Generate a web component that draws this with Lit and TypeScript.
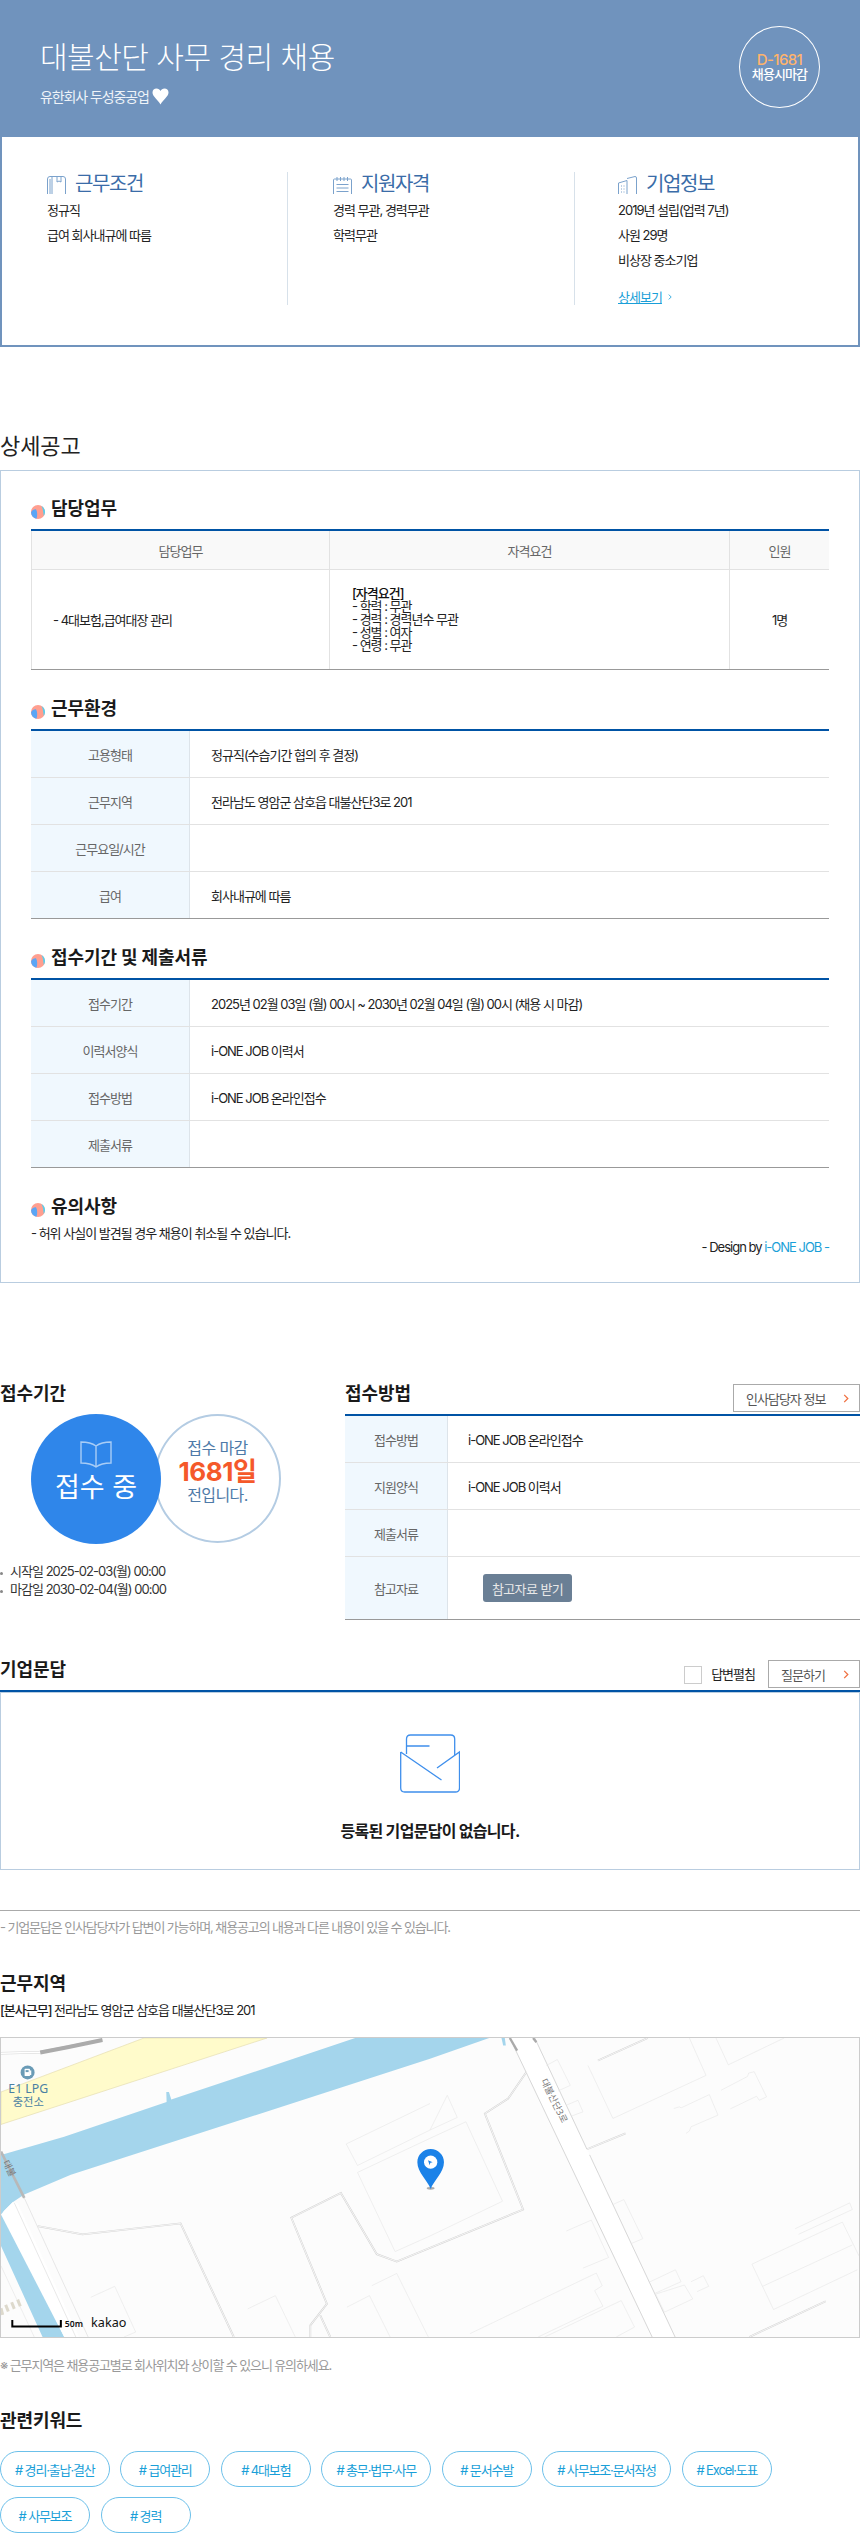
import { LitElement, html, css, svg } from "lit";
import { customElement } from "lit/decorators.js";

const bldg: string[] = [
  "270,805 342,772 405,910 370,925", "742,840 825,800 885,925", "1040,835 1108,800 1170,925",
  "1115,770 1190,733 1285,925", "1290,220 1038,342 1072,407 1290,300", "1290,325 1072,428 1185,667 1290,620",
  "1290,300 1342,195 1372,262 1290,300", "1290,325 1398,275 1508,515 1290,620",
  "1640,105 1673,87 1712,165 1675,182", "1700,225 1735,210 1750,245 1715,258",
  "1765,105 1840,265 2120,135 2070,22", "2150,22 2187,103 2355,22",
  "2023,235 2040,230 2045,233 2130,193 2156,255 2075,290 2070,303 2060,310",
  "2165,180 2245,138 2248,128 2265,124 2302,200 2280,210 2272,198 2193,236",
  "1840,525 1873,510 1930,628 1897,642", "1700,605 1775,572 1827,685 1750,717",
  "1410,915 1790,732 1808,770 1785,785 1810,832 1615,925", "1635,925 1865,815 1905,895 1850,925",
  "1948,760 2028,722 2045,758 1967,793 1995,850 2080,810 2055,768 1970,795",
  "2075,758 2112,740 2128,772 2093,788", "2388,598 2552,520 2560,540 2398,615",
  "2258,705 2530,578 2580,680", "2290,772 2560,647", "2258,705 2323,842 2575,722",
];

const dbl: string[] = [
  "110,590 245,615 540,582 700,925",
  "930,925 930,890 980,825 873,565 1022,490 1130,675 1190,697 1570,540 1455,250 1525,205 1580,125",
  "960,860 990,925", "1795,90 1945,22", "2250,925 2480,817", "1762,358 1878,310",
];

const mapArt = svg`
  <rect x="0" y="22" width="2580" height="903" fill="#fcfcfc"></rect>
  <polygon points="0,185 430,22 800,22 0,283" fill="#fffbcb" stroke="#e4dcae" stroke-width="2"></polygon>
  <polygon points="0,375 190,320 498,215 497,185 505,185 512,208 1065,22 1468,22 1290,85 210,435 70,495 35,518 8,545 190,925 125,925 0,650" fill="#a4d5ec"></polygon>
  <polygon points="1505,22 1515,22 1518,45 1510,45" fill="#a4d5ec"></polygon>
  <polygon points="0,555 8,545 35,518 50,520 235,925 190,925" fill="#ffffff"></polygon>
  <polyline points="0,68 115,65 305,28" fill="none" stroke="#d5d5d5" stroke-width="7"></polyline>
  <polyline points="0,68 115,65 305,28" fill="none" stroke="#fff" stroke-width="4"></polyline>
  <polyline points="118,66 200,50 305,28" fill="none" stroke="#ababab" stroke-width="12"></polyline>
  <polyline points="0,365 70,505" fill="none" stroke="#b8b8b8" stroke-width="8"></polyline>
  <polyline points="40,520 225,925" fill="none" stroke="#d8d8d8" stroke-width="1.8"></polyline>
  <polyline points="70,505 262,925" fill="none" stroke="#d8d8d8" stroke-width="1.8"></polyline>
  <polyline points="0,710 100,925" fill="none" stroke="#e4e4e4" stroke-width="1.8"></polyline>
  <g stroke="#ddd9cc" stroke-width="9">
    <line x1="50" y1="812" x2="58" y2="832"></line><line x1="32" y1="820" x2="40" y2="840"></line>
    <line x1="14" y1="828" x2="22" y2="848"></line><line x1="0" y1="838" x2="5" y2="858"></line>
  </g>
  <polygon points="1530,22 1605,22 2027,925 1958,925" fill="#ffffff"></polygon>
  <polyline points="1530,22 1958,925" fill="none" stroke="#cfcfcf" stroke-width="2.5"></polyline>
  <polyline points="1605,22 1762,358" fill="none" stroke="#cfcfcf" stroke-width="2.5"></polyline>
  <polyline points="1770,375 2027,925" fill="none" stroke="#cfcfcf" stroke-width="2.5"></polyline>
  <polyline points="1530,22 1552,60" fill="none" stroke="#aaa" stroke-width="7"></polyline>
  <polyline points="1600,22 1610,35" fill="none" stroke="#aaa" stroke-width="7"></polyline>
  ${bldg.map((p) => svg`<polyline points=${p} fill="none" stroke="#e6e6e6" stroke-width="1.8"></polyline>`)}
  ${dbl.map((p) => svg`<polyline points=${p} fill="none" stroke="#d2d2d2" stroke-width="5.5"></polyline><polyline points=${p} fill="none" stroke="#fbfbfb" stroke-width="2.5"></polyline>`)}
  <circle cx="80" cy="126" r="21" fill="#6a9bb6"></circle>
  <rect x="71" y="115" width="16" height="22" rx="2" fill="#fff"></rect>
  <rect x="74" y="119" width="9" height="6" fill="#6a9bb6"></rect>
  <rect x="87" y="120" width="4" height="14" fill="#fff"></rect>
  <text class="mt lpg" x="82" y="189" text-anchor="middle">E1 LPG</text>
  <text class="mt lpg2" x="82" y="226" text-anchor="middle">충전소</text>
  <text class="mt road" transform="translate(1655,216) rotate(64)" text-anchor="middle">대불산단3로</text>
  <text class="mt road" transform="translate(16,420) rotate(64)" text-anchor="middle">대불</text>
  <path d="M34 874 V893 H180 V874" fill="none" stroke="#000" stroke-width="6"></path>
  <text class="mt sc" x="192" y="895">50m</text>
  <text class="mt kk" x="271" y="896">kakao</text>
  <ellipse cx="1292" cy="476" rx="12" ry="4" fill="#aaa"></ellipse>
  <path d="M1292 478 C1283 452 1252 428 1252 397 C1252 375 1270 357 1292 357 C1314 357 1332 375 1332 397 C1332 428 1301 452 1292 478 Z" fill="#1b82e8"></path>
  <circle cx="1292" cy="397" r="20" fill="#fff"></circle>
  <path d="M1284 391 L1298 397 L1291 399 L1289 406 Z" fill="#1b82e8"></path>
`;

const bullet = html`<svg class="bullet" viewBox="0 0 14 14">
  <circle cx="7" cy="7" r="7" fill="#ff9f90"></circle>
  <path d="M0 7.5 C1 5 3 4 5 4.2 C6.5 7 6.5 10.5 5.5 13.8 C2.5 13.2 0.2 10.8 0 7.5 Z" fill="#5aa6f6"></path>
  <path d="M10.5 1 C13 2.5 14 5 14 7 C14 8.5 13.5 9.8 12.6 11 C12.6 7.5 12 4 10.5 1 Z" fill="#4fd2f2"></path>
</svg>`;

const chev = (cls = "chev") => html`<svg class=${cls} viewBox="0 0 6 10"><polyline points="1,1 5,5 1,9" fill="none" stroke="currentColor" stroke-width="1.4"></polyline></svg>`;

@customElement("app-root")
export class AppRoot extends LitElement {
  static styles = css`
    :host { display: block; width: 860px; font-family: Inter, "Noto Sans CJK KR", sans-serif; color: #222; font-size: 13px; letter-spacing: -1px; padding-bottom: 1px; }
    * { box-sizing: border-box; }
    .hero { height: 137px; background: #7093bd; display: flex; justify-content: space-between; padding: 26px 40px 0 40px; color: #fff; }
    .title { font-size: 30px; line-height: 40px; font-weight: 300; letter-spacing: -0.5px; margin-top: 11px; }
    .sub { display: flex; align-items: center; gap: 3px; height: 20px; margin-top: 9px; font-size: 14px; font-weight: 400; color: #eef3f9; letter-spacing: -1.1px; }
    .heart { width: 17px; height: 17px; }
    .dday { width: 81px; height: 82px; border: 1px solid #fff; border-radius: 50%; display: flex; flex-direction: column; align-items: center; justify-content: center; font-size: 13px; line-height: 15px; font-weight: 500; letter-spacing: -0.9px; }
    .dday b { color: #ffb36b; font-size: 15px; font-weight: 500; letter-spacing: -0.6px; }
    .summary { height: 210px; border: 2px solid #7093bd; border-top: 0; display: grid; grid-template-columns: 285px 287px 284px; padding-top: 35px; }
    .col { height: 133px; padding-left: 45px; }
    .col + .col { border-left: 1px solid #d7e1ea; }
    .col:last-child { padding-left: 43px; }
    .col h4 { margin: 0; height: 26px; display: flex; align-items: center; gap: 9px; font-size: 20px; font-weight: 400; color: #3a6ca8; letter-spacing: -1.4px; padding-bottom: 6px; }
    .col .ic { width: 19px; height: 18px; flex: none; margin-top: 6px; }
    .col p { margin: 0; line-height: 25px; }
    .more { display: flex; align-items: center; gap: 6px; margin-top: 16px; font-size: 13px; line-height: 16px; color: #1a9fd8; }
    .more span { text-decoration: underline; }
    .more .chev { width: 4px; height: 6px; color: #1a9fd8; }
    h2 { margin: 84px 0 9px; font-size: 22px; line-height: 30px; font-weight: 400; letter-spacing: -0.1px; }
    .detail { border: 1px solid #b9cde0; padding: 21px 30px 28px; }
    .sec-h { height: 30px; margin: 0 0 7px; display: flex; align-items: center; gap: 6px; font-size: 18px; font-weight: 700; letter-spacing: -0.1px; color: #1a1a1a; }
    .bullet { width: 14px; height: 14px; flex: none; margin-top: 10px; }
    .sec-h.plain { margin: 0; }
    .tb { border-top: 2px solid #0053a5; margin-bottom: 22px; }
    .tb.end { border-bottom: 1px solid #999; }
    .r { display: flex; height: 47px; border-bottom: 1px solid #e2e2e2; align-items: stretch; }
    .r:last-child { border-bottom: 0; height: 46px; }
    .k { flex: none; width: 159px; background: #f0f8fe; border-right: 1px solid #dde4ea; color: #666; display: flex; align-items: center; justify-content: center; }
    .v { flex: 1; padding-left: 21px; display: flex; align-items: center; color: #222; }
    .h3c { display: grid; grid-template-columns: 298px 400px 1fr; border-left: 1px solid #e2e2e2; }
    .h3c > div { border-right: 1px solid #e2e2e2; display: flex; align-items: center; }
    .h3c > div:last-child { border-right: 0; justify-content: center; }
    .hd > div { height: 39px; background: #f9f9f9; justify-content: center; color: #666; border-bottom: 1px solid #e2e2e2; }
    .bd > div { height: 99px; }
    .bd .a { padding-left: 21px; }
    .bd .b { padding-left: 22px; display: block; padding-top: 17px; line-height: 13px; color: #222; }
    .bd .b b { font-weight: 500; color: #111; }
    .note { line-height: 14px; height: 14px; margin-top: 6px; }
    .design { line-height: 14px; height: 14px; text-align: right; }
    .design span { color: #1a9fd8; }
    .two { display: flex; margin-top: 96px; }
    .left { width: 345px; flex: none; }
    .right { flex: 1; }
    .plainh { font-size: 18px; line-height: 30px; height: 30px; font-weight: 700; letter-spacing: -0.1px; margin: 0; color: #1a1a1a; }
    .circles { display: flex; margin: 5px 0 0 31px; }
    .c1 { position: relative; z-index: 1; width: 130px; height: 130px; border-radius: 50%; background: #2f86ea; color: #fff; display: flex; flex-direction: column; align-items: center; padding-top: 27px; font-size: 27px; line-height: 34px; letter-spacing: 0; }
    .c1 svg { width: 32px; height: 27px; margin-bottom: 3px; }
    .c2 { width: 127px; height: 129px; margin-left: -7px; border: 2px solid #b4cce3; border-radius: 50%; display: flex; flex-direction: column; align-items: center; justify-content: center; font-size: 16px; line-height: 20px; color: #4e7aa8; letter-spacing: -0.6px; padding-bottom: 15px; }
    .c2 b { color: #f5592a; font-size: 26px; line-height: 28px; font-weight: 700; letter-spacing: -0.4px; margin-bottom: -1px; }
    .dates { list-style: none; margin: 18px 0 0; padding: 0; }
    .dates li { line-height: 18px; padding-left: 10px; position: relative; color: #333; letter-spacing: -0.97px; }
    .dates li::before { content: ""; position: absolute; left: 0; top: 10px; width: 3px; height: 3px; border-radius: 50%; background: #888; }
    .rhead { display: flex; justify-content: space-between; align-items: flex-end; height: 33px; margin-bottom: 2px; }
    .rhead .plainh { align-self: flex-start; }
    .btn { height: 28px; border: 1px solid #aaa; display: flex; align-items: center; justify-content: space-between; padding: 0 10px 0 12px; color: #555; background: #fff; }
    .btn.w1 { width: 127px; }
    .btn.w2 { width: 92px; }
    .chev { width: 6px; height: 9px; color: #f07040; flex: none; }
    .t2 .k { width: 103px; }
    .t2 .v { padding-left: 20px; }
    .t2 { margin-bottom: 0; }
    .t2 .r:last-child { height: 62px; }
    .dl { background: #6a7f95; color: #e8e8e8; height: 28px; width: 89px; border-radius: 3px; display: flex; align-items: center; justify-content: center; margin-left: 15px; letter-spacing: -0.6px; }
    .qhead { display: flex; justify-content: space-between; height: 35px; margin-top: 35px; }
    .qright { display: flex; align-items: flex-start; padding-top: 5px; }
    .cb { width: 18px; height: 18px; border: 1px solid #ccc; margin: 6px 9px 0 0; }
    .cbl { line-height: 28px; margin-right: 13px; color: #222; }
    .qbox { border-top: 2px solid #0053a5; }
    .qbody { height: 178px; border: 1px solid #b9cde0; display: flex; flex-direction: column; align-items: center; padding-top: 41px; font-size: 16px; font-weight: 700; line-height: 24px; letter-spacing: -0.7px; color: #1a1a1a; }
    .qbody svg { width: 60px; height: 59px; margin-bottom: 26px; }
    .hr { border-top: 1px solid #aaa; margin-top: 40px; }
    .gray { color: #999; line-height: 18px; letter-spacing: -1.12px; }
    .g1 { margin-top: 7px; }
    .h-map { margin-top: 33px; }
    .addr { margin-top: 2px; line-height: 18px; }
    .addr b { font-weight: 500; }
    .map { margin-top: 18px; height: 301px; border: 1px solid #ccc; }
    .map svg { display: block; width: 858px; height: 299px; }
    .mt { font-family: "Noto Sans", "Noto Sans CJK KR", sans-serif; letter-spacing: 0; }
    .lpg { font-size: 37px; fill: #4a7fa3; }
    .lpg2 { font-size: 34px; fill: #4a7fa3; }
    .road { font-size: 28px; fill: #777; }
    .sc { font-size: 26px; fill: #111; font-weight: 600; }
    .kk { font-size: 38px; fill: #111; }
    .g2 { margin-top: 18px; }
    .h-kw { margin-top: 32px; }
    .tags { display: flex; flex-wrap: wrap; gap: 10px 10.6px; margin-top: 15px; }
    .tag { height: 36px; min-width: 90px; padding: 0 14px; border: 1px solid #6cc0ea; border-radius: 18px; display: flex; align-items: center; justify-content: center; color: #1a9fd8; font-size: 13px; letter-spacing: -1.15px; background: #fff; }
  `;

  private row(k: string, v: unknown = "") {
    return html`<div class="r"><div class="k">${k}</div><div class="v">${v}</div></div>`;
  }

  render() {
    return html`
      <div class="hero">
        <div>
          <div class="title">대불산단 사무 경리 채용</div>
          <div class="sub">유한회사 두성중공업
            <svg class="heart" viewBox="0 0 17 17"><path d="M8.5 16.5 C6 12 .5 8.5 .5 4.5 C.5 2 2.3 .5 4.5 .5 C6.3 .5 7.8 1.5 8.5 3 C9.2 1.5 10.7 .5 12.5 .5 C14.7 .5 16.5 2 16.5 4.5 C16.5 8.5 11 12 8.5 16.5 Z" fill="#fff"></path></svg>
          </div>
        </div>
        <div class="dday"><b>D-1681</b><span>채용시마감</span></div>
      </div>
      <div class="summary">
        <div class="col">
          <h4><svg class="ic" viewBox="0 0 19 18" fill="none" stroke="#7ba2cc"><path d="M.5 18 V3 Q.5 .5 3 .5 H16 Q18.5 .5 18.5 3 V18 M5 18 V.5 M3 18 V3 M14 .5 V6 L12 5 L10 6 V.5" stroke-width="1"></path></svg>근무조건</h4>
          <p>정규직</p><p>급여 회사내규에 따름</p>
        </div>
        <div class="col">
          <h4><svg class="ic" viewBox="0 0 19 18" fill="none" stroke="#7ba2cc"><path d="M.5 18 V4 Q.5 3 1.5 3 H17.5 Q18.5 3 18.5 4 V18 M4 1 V5 M7.5 1 V5 M11 1 V5 M14.5 1 V5 M3.5 8.5 H15.5 M3.5 12 H15.5 M3.5 15.5 H15.5" stroke-width="1"></path></svg>지원자격</h4>
          <p>경력 무관, 경력무관</p><p>학력무관</p>
        </div>
        <div class="col">
          <h4><svg class="ic" viewBox="0 0 19 18" fill="none" stroke="#7ba2cc"><path d="M.5 18 V7 L9 4.5 V18 M9 2.5 L17 .5 Q18.5 .5 18.5 2 V18 M3 10 H4 M5.5 10 H6.5 M3 13 H4 M5.5 13 H6.5 M3 16 H4 M5.5 16 H6.5" stroke-width="1"></path></svg>기업정보</h4>
          <p>2019년 설립(업력 7년)</p><p>사원 29명</p><p>비상장 중소기업</p>
          <div class="more"><span>상세보기</span>${chev()}</div>
        </div>
      </div>

      <h2>상세공고</h2>
      <div class="detail">
        <h3 class="sec-h">${bullet}담당업무</h3>
        <div class="tb end">
          <div class="h3c hd"><div>담당업무</div><div>자격요건</div><div>인원</div></div>
          <div class="h3c bd">
            <div class="a">- 4대보험,급여대장 관리</div>
            <div class="b"><b>[자격요건]</b><br>- 학력 : 무관<br>- 경력 : 경력년수 무관<br>- 성별 : 여자<br>- 연령 : 무관</div>
            <div>1명</div>
          </div>
        </div>
        <h3 class="sec-h">${bullet}근무환경</h3>
        <div class="tb end">
          ${this.row("고용형태", "정규직(수습기간 협의 후 결정)")}
          ${this.row("근무지역", "전라남도 영암군 삼호읍 대불산단3로 201")}
          ${this.row("근무요일/시간")}
          ${this.row("급여", "회사내규에 따름")}
        </div>
        <h3 class="sec-h">${bullet}접수기간 및 제출서류</h3>
        <div class="tb end">
          ${this.row("접수기간", "2025년 02월 03일 (월) 00시 ~ 2030년 02월 04일 (월) 00시 (채용 시 마감)")}
          ${this.row("이력서양식", "i-ONE JOB 이력서")}
          ${this.row("접수방법", "i-ONE JOB 온라인접수")}
          ${this.row("제출서류")}
        </div>
        <h3 class="sec-h plain">${bullet}유의사항</h3>
        <div class="note">- 허위 사실이 발견될 경우 채용이 취소될 수 있습니다.</div>
        <div class="design">- Design by <span>i-ONE JOB -</span></div>
      </div>

      <div class="two">
        <div class="left">
          <h3 class="plainh">접수기간</h3>
          <div class="circles">
            <div class="c1">
              <svg viewBox="0 0 32 27" fill="none" stroke="#a9cdf6" stroke-width="1.4"><path d="M16 5 C12 2 6 1 1 1 V22 C7 22 12 23 16 26 C20 23 25 22 31 22 V1 C26 1 20 2 16 5 Z M16 5 V26"></path></svg>
              접수 중
            </div>
            <div class="c2">접수 마감<b>1681일</b>전입니다.</div>
          </div>
          <ul class="dates"><li>시작일 2025-02-03(월) 00:00</li><li>마감일 2030-02-04(월) 00:00</li></ul>
        </div>
        <div class="right">
          <div class="rhead"><h3 class="plainh">접수방법</h3><div class="btn w1">인사담당자 정보${chev()}</div></div>
          <div class="tb end t2">
            ${this.row("접수방법", "i-ONE JOB 온라인접수")}
            ${this.row("지원양식", "i-ONE JOB 이력서")}
            ${this.row("제출서류")}
            ${this.row("참고자료", html`<div class="dl">참고자료 받기</div>`)}
          </div>
        </div>
      </div>

      <div class="qhead">
        <h3 class="plainh">기업문답</h3>
        <div class="qright"><div class="cb"></div><div class="cbl">답변펼침</div><div class="btn w2">질문하기${chev()}</div></div>
      </div>
      <div class="qbox">
        <div class="qbody">
          <svg viewBox="0 0 60 59" fill="none" stroke="#3f8fec" stroke-width="1.3">
            <path d="M6.5 20 V5 Q6.5 1 10.5 1 H50.7 Q54.7 1 54.7 5 V21 M6.5 12 H29.5"></path>
            <path d="M.7 18 V54 Q.7 58 4.7 58 H55.5 Q59.5 58 59.5 54 V18 L37 34 M.7 18 L41.5 46"></path>
          </svg>
          등록된 기업문답이 없습니다.
        </div>
      </div>
      <div class="hr"></div>
      <div class="gray g1">- 기업문답은 인사담당자가 답변이 가능하며, 채용공고의 내용과 다른 내용이 있을 수 있습니다.</div>

      <h3 class="plainh h-map">근무지역</h3>
      <div class="addr"><b>[본사근무]</b> 전라남도 영암군 삼호읍 대불산단3로 201</div>
      <div class="map"><svg viewBox="0 22 2580 903" preserveAspectRatio="none">${mapArt}</svg></div>
      <div class="gray g2">※ 근무지역은 채용공고별로 회사위치와 상이할 수 있으니 유의하세요.</div>

      <h3 class="plainh h-kw">관련키워드</h3>
      <div class="tags">
        ${["# 경리·출납·결산", "# 급여관리", "# 4대보험", "# 총무·법무·사무", "# 문서수발", "# 사무보조·문서작성", "# Excel·도표", "# 사무보조", "# 경력"].map((t) => html`<div class="tag">${t}</div>`)}
      </div>
    `;
  }
}
